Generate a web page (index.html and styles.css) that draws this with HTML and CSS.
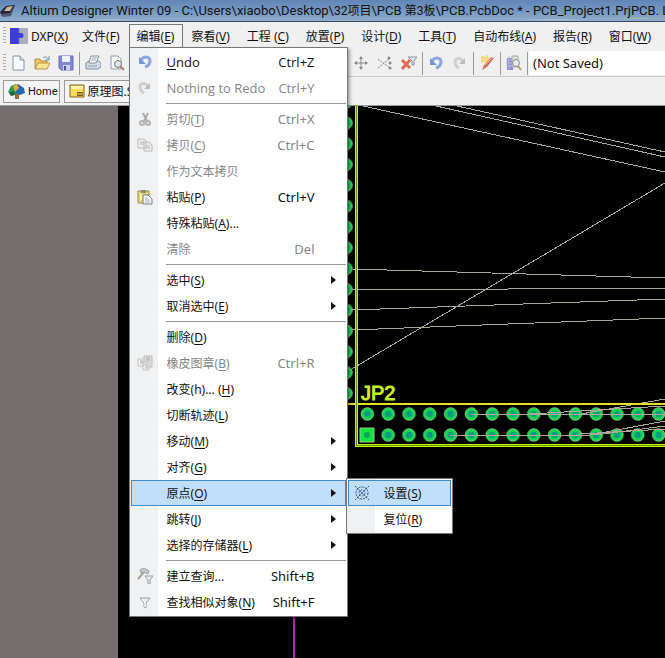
FILE: index.html
```html
<!DOCTYPE html>
<html lang="zh-CN">
<head>
<meta charset="utf-8">
<title>Altium Designer Winter 09</title>
<link rel="stylesheet" href="styles.css">
</head>
<body>
<header class="titlebar">
  <svg class="app-icon" width="16" height="16" viewBox="0 0 16 16"><path d="M0 9 6 3l9-1-4 9-9 2z" fill="#24243a"/><path d="m4 8 3-4 6-1-3 5z" fill="#c9b7a5"/><path d="m1 11 9-1 4-6-3 9-8 1z" fill="#55556c"/></svg>
  <span class="title">Altium Designer Winter 09 - C:\Users\xiaobo\Desktop\<span class="cjk">32项目</span>\PCB <span class="cjk">第3板</span>\PCB.PcbDoc * - PCB_Project1.PrjPCB. L</span>
</header>

<nav class="menubar">
  <span class="grip"></span>
  <button class="menu-title dxp"><svg width="18" height="16" viewBox="0 0 18 16"><path d="M0 0h9v16H0z" fill="#3c3cdd"/><path d="M9 0h9v16H9z" fill="#a9adbd"/><path d="M9 5h2a2.500 2.500 0 1 1 0 5H9z" fill="#3c3cdd"/><path d="M9 1v4M9 10v5" stroke="#777b99"/></svg><span>DXP(<u>X</u>)</span></button>
  <button class="menu-title">文件(<u>F</u>)</button>
  <div class="menu-host">
    <button class="menu-title open">编辑(<u>E</u>)</button>
    <div class="popup main-popup">
      <button class="item latin"><svg class="ico" viewBox="0 0 16 16"><path d="M4 6c3-4 9-4 9 1 0 3-2 5-5 6" fill="none" stroke="#8ba6df" stroke-width="3"/><path d="M2 3v7h7z" fill="#7595d7"/></svg><span><u>U</u>ndo</span><kbd>Ctrl+Z</kbd></button>
      <button class="item latin" disabled><svg class="ico" viewBox="0 0 16 16"><path d="M11 6C8 2 3 3 3 7c0 3 2 5 4 6" fill="none" stroke="#cfcfcf" stroke-width="3"/><path d="M13 3v6H7z" fill="#bdbdbd"/></svg><span>Nothing to Redo</span><kbd>Ctrl+Y</kbd></button>
      <hr>
      <button class="item" disabled><svg class="ico" viewBox="0 0 16 16"><path d="m6 2 4 8M11 2 7 10" stroke="#aaa" stroke-width="2" fill="none"/><circle cx="5" cy="12" r="2" fill="none" stroke="#b3b3b3" stroke-width="2"/><circle cx="11" cy="12" r="2" fill="none" stroke="#b3b3b3" stroke-width="2"/></svg><span>剪切(<u>T</u>)</span><kbd>Ctrl+X</kbd></button>
      <button class="item" disabled><svg class="ico" viewBox="0 0 16 16"><path d="M1 2h6l2 2v7H1zM7 5h5l3 3v6H7z" fill="#eee" stroke="#bbb"/><path d="M3 5h4M3 7h4M9 9h4M9 11h4" stroke="#bbb"/></svg><span>拷贝(<u>C</u>)</span><kbd>Ctrl+C</kbd></button>
      <button class="item" disabled><i class="ico"></i><span>作为文本拷贝</span></button>
      <button class="item"><svg class="ico" viewBox="0 0 16 16"><path d="M1 2h11v12H1z" fill="#e5d474" stroke="#a18c43"/><path d="M4 1h5v3H4z" fill="#8c8d7d"/><path d="M3 5h2v6H3z" fill="#f8efaa"/><path d="M6 6h5l4 4v5H6z" fill="#f5f6fb" stroke="#797f8e"/><path d="M8 9h3M8 11h5M8 13h5" stroke="#a5aec2"/></svg><span>粘贴(<u>P</u>)</span><kbd>Ctrl+V</kbd></button>
      <button class="item"><i class="ico"></i><span>特殊粘贴(<u>A</u>)...</span></button>
      <button class="item" disabled><i class="ico"></i><span>清除</span><kbd>Del</kbd></button>
      <hr>
      <button class="item sub"><i class="ico"></i><span>选中(<u>S</u>)</span></button>
      <button class="item sub"><i class="ico"></i><span>取消选中(<u>E</u>)</span></button>
      <hr>
      <button class="item"><i class="ico"></i><span>删除(<u>D</u>)</span></button>
      <button class="item" disabled><svg class="ico" viewBox="0 0 16 16"><path d="M7 1h8v11H7z" fill="#ddd" stroke="#bbb"/><path d="M1 4h6v7H1zM6 7h6v8H6z" fill="#f2f2f2" stroke="#c3c3c3"/><path d="M3 6h3M3 8h3M8 9h3M8 11h3M8 13h3M9 3h4M9 5h4" stroke="#aaa"/></svg><span>橡皮图章(<u>B</u>)</span><kbd>Ctrl+R</kbd></button>
      <button class="item"><i class="ico"></i><span>改变(h)... (<u>H</u>)</span></button>
      <button class="item"><i class="ico"></i><span>切断轨迹(<u>L</u>)</span></button>
      <button class="item sub"><i class="ico"></i><span>移动(<u>M</u>)</span></button>
      <button class="item sub"><i class="ico"></i><span>对齐(<u>G</u>)</span></button>
      <div class="menu-host">
        <button class="item sub active"><i class="ico"></i><span>原点(<u>O</u>)</span></button>
        <div class="popup sub-popup">
          <button class="item active"><svg class="ico" viewBox="0 0 16 16"><circle cx="8" cy="8" r="6" fill="none" stroke="#32486b" stroke-dasharray="2 1"/><circle cx="8" cy="8" r="3" fill="none" stroke="#52698e" stroke-dasharray="2 1"/><path d="m1 1 14 14M15 1 1 15" stroke="#32486b" stroke-dasharray="2 1"/></svg><span>设置(<u>S</u>)</span></button>
          <button class="item"><i class="ico"></i><span>复位(<u>R</u>)</span></button>
        </div>
      </div>
      <button class="item sub"><i class="ico"></i><span>跳转(<u>J</u>)</span></button>
      <button class="item sub"><i class="ico"></i><span>选择的存储器(<u>L</u>)</span></button>
      <hr>
      <button class="item"><svg class="ico" viewBox="0 0 16 16"><path d="m1 11 6-7" stroke="#a5a49b" stroke-width="2"/><path d="M3 2 7 0l5 3-1 3-4-2-3 1z" fill="#c4c9cc" stroke="#9a9fa1"/><path d="M8 8h8l-3 4v4h-2v-4z" fill="#e8edf0" stroke="#98a0a7"/></svg><span>建立查询...</span><kbd>Shift+B</kbd></button>
      <button class="item"><svg class="ico" viewBox="0 0 16 16"><path d="M3 4h10L9 9v5l-2-1V9z" fill="#edf0f2" stroke="#959da2"/><path d="m5 5 3 4v4" fill="none" stroke="#fff"/></svg><span>查找相似对象(<u>N</u>)</span><kbd>Shift+F</kbd></button>
    </div>
  </div>
  <button class="menu-title">察看(<u>V</u>)</button>
  <button class="menu-title">工程 (<u>C</u>)</button>
  <button class="menu-title">放置(<u>P</u>)</button>
  <button class="menu-title">设计(<u>D</u>)</button>
  <button class="menu-title">工具(<u>T</u>)</button>
  <button class="menu-title">自动布线(<u>A</u>)</button>
  <button class="menu-title">报告(<u>R</u>)</button>
  <button class="menu-title">窗口(<u>W</u>)</button>
</nav>

<div class="toolbar">
  <div class="tools file-tools">
    <span class="grip"></span>
    <button class="tool" aria-label="New"><svg viewBox="0 0 16 16"><path d="M3 1h7l4 4v10H3z" fill="#fcfdff" stroke="#8493ae"/><path d="M10 1v4h4" fill="#d3dced" stroke="#8493ae"/></svg></button>
    <button class="tool" aria-label="Open"><svg viewBox="0 0 16 16"><path d="M1 14V4h5l1 2h6v3" fill="#efca6c" stroke="#b18b3c"/><path d="m1 14 3-6h12l-3 6z" fill="#fbe397" stroke="#bc9143"/><path d="M9 3c2-2 4-1 5 1M15 1v4h-4" fill="none" stroke="#7488a8"/></svg></button>
    <button class="tool" aria-label="Save"><svg viewBox="0 0 16 16"><path d="M1 1h14v14H3l-2-2z" fill="#8587d1" stroke="#6a6cb9"/><path d="M4 1h8v6H4z" fill="#eef1ff"/><path d="M5 10h7v5H5z" fill="#cfd2e9"/><path d="M6 11h2v4H6z" fill="#4b4d91"/></svg></button>
    <span class="divider"></span>
    <button class="tool" aria-label="Print"><svg viewBox="0 0 16 16"><path d="m1 8 3-2h10l2 2v4l-3 2H1z" fill="#d5d9e4" stroke="#858da2"/><path d="M6 1h8l-3 7H4z" fill="#fff" stroke="#8990a2"/><path d="M3 11h9M7 3h5M6 5h5" stroke="#9aa1b2"/></svg></button>
    <button class="tool" aria-label="Print preview"><svg viewBox="0 0 16 16"><path d="M2 1h7l3 3v10H2z" fill="#fcfdff" stroke="#9099ad"/><circle cx="9" cy="9" r="3.500" fill="#dde5ed" stroke="#777"/><path d="m11 11 4 4" stroke="#aa8172" stroke-width="2"/></svg></button>
  </div>
  <div class="tools edit-tools">
    <button class="tool" aria-label="Move"><svg viewBox="0 0 16 16"><path d="M8 2v12M2 8h12" stroke="#888"/><path d="m6 4 2-3 2 3zM6 12l2 3 2-3zM4 6 1 8l3 2zM12 6l3 2-3 2z" fill="#888"/></svg></button>
    <button class="tool" aria-label="Deselect"><svg viewBox="0 0 16 16"><path d="m1 4 12 9M1 13 12 4" stroke="#888" stroke-dasharray="2 1"/><circle cx="12" cy="3" r="1.500" fill="#888"/><circle cx="13" cy="8" r="1.500" fill="#888"/><circle cx="13" cy="13" r="1.500" fill="#888"/></svg></button>
    <button class="tool" aria-label="Clear filter"><svg viewBox="0 0 16 16"><path d="M7 2h9l-3 4v4h-2V6z" fill="#dfe6eb" stroke="#8796a1"/><path d="m1 5 8 8M9 5l-8 9" stroke="#df6a55" stroke-width="3"/></svg></button>
    <span class="divider"></span>
    <button class="tool" aria-label="Undo"><svg viewBox="0 0 16 16"><path d="M4 6c3-4 9-4 9 1 0 3-2 5-5 6" fill="none" stroke="#8ba6df" stroke-width="3"/><path d="M2 3v7h7z" fill="#7595d7"/></svg></button>
    <button class="tool" aria-label="Redo"><svg viewBox="0 0 16 16"><path d="M11 6C8 2 3 3 3 7c0 3 2 5 4 6" fill="none" stroke="#cfcfcf" stroke-width="3"/><path d="M13 3v6H7z" fill="#bdbdbd"/></svg></button>
    <span class="divider"></span>
    <button class="tool" aria-label="Wizard"><svg viewBox="0 0 16 16"><path d="M2 1h7v7H2z" fill="#f9e6a0"/><path d="M2 3h8M4 1v6M8 0v6M2 6h5" stroke="#edc75c" stroke-dasharray="2 1"/><path d="m3 15 2-5 7-8 3 1-7 9z" fill="#d9705c"/><path d="m6 10 7-7" stroke="#f3b5a2"/></svg></button>
    <span class="divider"></span>
    <button class="tool" aria-label="Browse components"><svg viewBox="0 0 16 16"><path d="M1 3h6v12H1z" fill="#8989cf"/><path d="M6 1h6v11H6z" fill="#dce0d1" stroke="#a9afb0"/><path d="M0 5h7M0 8h7M0 11h7M3 1v14" stroke="#b8b9e2"/><circle cx="10" cy="8" r="3.500" fill="#e5ece9" stroke="#889"/><path d="m12 11 3 4" stroke="#b69d69" stroke-width="2"/></svg></button>
    <span class="divider"></span>
  </div>
  <input class="saved" aria-label="Saved view" value="(Not Saved)">
</div>

<div class="tabs">
  <button class="tab home"><svg width="17" height="16" viewBox="0 0 17 16"><path d="M7 7h4v9H7z" fill="#9a692c"/><path d="m0 9 3-6 5-2v9l-4 2z" fill="#309947"/><path d="m6 4 4-3 6 4 1 5-5 2-5-2z" fill="#2569a9"/><path d="m5 3 4-2 2 4-4 4z" fill="#e6ab38"/><path d="m1 10 5-2 1 4-4 1z" fill="#1b6938"/></svg>Home</button>
  <button class="tab"><svg width="16" height="14" viewBox="0 0 16 14"><path d="M1 1h14v12H1z" fill="#f8dc5a" stroke="#80651a"/><path d="M2 2h12v3H2z" fill="#fff2a5"/><path d="M8 8h6v4H8z" fill="#805b25"/><path d="M8 10h6" stroke="#f8dc5a"/></svg>原理图.SchDoc</button>
</div>

<main class="workspace">
  <aside class="outside"></aside>
  <svg class="board" viewBox="118 106 547 552" preserveAspectRatio="xMinYMin slice">
    <defs>
      <g id="pad"><circle r="6.300" fill="#14d650" stroke="#8fcf84" stroke-width=".8"/><circle r="3.200" fill="#0a9c80"/></g>
      <pattern id="pins" patternUnits="userSpaceOnUse" x="357" y="404" width="20.800" height="21"><use href="#pad" x="10.400" y="10"/></pattern>
      <pattern id="side" patternUnits="userSpaceOnUse" x="338" y="112" width="16" height="20.800"><use href="#pad" x="8" y="11"/></pattern>
    </defs>
    <path d="M338 106h16v294h-16z" fill="url(#side)"/>
    <path d="M357 404h308v41H357z" fill="url(#pins)"/>
    <path d="M360 428h14v14h-14z" fill="#14e63c" stroke="#a0c784"/><circle cx="367" cy="435" r="3" fill="#0da660"/>
    <g fill="none" stroke="#aaa99a" shape-rendering="crispEdges">
      <path d="m363 106 302 66M436 106l229 51M457 106l208 46M350 370l315-187M352 269l313 9M352 290l313-2M352 310l313-11M352 330l313-12"/>
      <path d="M471 414h110l84-15M528 414h137M530 414l135-8M450 435h140l75-14M595 435l70-9M580 434l85-5"/>
    </g>
    <path d="M348 404h317" stroke="#e8df24" stroke-width="2"/>
    <g fill="none" shape-rendering="crispEdges">
      <path d="M356.500 106v339.500H665" stroke="#c9f500" stroke-width="3"/>
      <path d="M356.500 106v339.500H665" stroke="#5c9400"/>
    </g>
    <text class="designator" x="361" y="400">JP2</text>
    <path d="M294 600v58" stroke="#a82ca8" stroke-width="2"/>
  </svg>
</main>
</body>
</html>
```

FILE: styles.css
```css
* { box-sizing: border-box; }
body {
  margin: 0;
  height: 100vh;
  display: flex;
  flex-direction: column;
  overflow: hidden;
  background: #f0f0f0;
  color: #111;
  font-family: "Noto Sans", "Noto Sans CJK SC", sans-serif;
  font-size: 12px;
}
button, input { font: inherit; color: inherit; }
button { margin: 0; padding: 0; border: 0; background: none; white-space: nowrap; }
u { text-underline-offset: 2px; }

.titlebar {
  display: flex;
  align-items: center;
  gap: 5px;
  height: 22px;
  flex: none;
  overflow: hidden;
  white-space: nowrap;
  border-bottom: 1px solid #344a60;
  background:
    radial-gradient(ellipse at 115px 20px, #b6bdc7 0, transparent 32px),
    radial-gradient(ellipse at 345px 22px, #a2c0b2 0, transparent 36px),
    radial-gradient(ellipse at 638px 18px, #a8bd8b 0, transparent 32px),
    radial-gradient(ellipse at 555px 20px, #b2bfce 0, transparent 36px),
    linear-gradient(#6185b5, #799cc5 60%, #8fabca);
}
.app-icon { flex: none; }
.title { font-family: Roboto, "Noto Sans CJK SC", sans-serif; font-size: 13px; line-height: 20px; }
.cjk { font-size: 12px; }

.menubar {
  display: flex;
  align-items: center;
  height: 28px;
  flex: none;
  padding-left: 3px;
}
.grip {
  flex: none;
  width: 3px;
  height: 18px;
  background: repeating-linear-gradient(#aaa 0 1px, #f0f0f0 1px 3px);
}
.menu-title { height: 24px; padding: 0 8px 0 7px; border: 1px solid transparent; flex: none; }
.dxp { display: flex; align-items: center; gap: 3px; padding: 0 5px 0 3px; }
.open { background: #f4f4f4; border-color: #777; border-bottom-color: #f4f4f4; }
.menu-host { position: relative; flex: none; }

.popup {
  position: absolute;
  display: flex;
  flex-direction: column;
  padding: 1px;
  border: 1px solid #777;
  background: linear-gradient(90deg, #f0f1f2 28px, #fff 28px);
  z-index: 2;
}
.main-popup { top: calc(100% - 1px); left: 0; width: 219px; box-shadow: 2px 2px 3px #0005; }
.sub-popup { top: -2px; left: 100%; width: 107px; }
.item {
  display: flex;
  align-items: center;
  width: 100%;
  height: 26px;
  padding: 0 30px 0 5px;
  border: 1px solid transparent;
  text-align: left;
}
.item .ico { width: 16px; height: 16px; flex: none; margin-right: 14px; }
.item span { flex: 1; }
.item kbd { font: inherit; font-size: 13px; }
.latin { font-family: "Open Sans", sans-serif; font-size: 13px; }
.item:disabled { color: #858585; }
.active { background: #bfdffd; border-color: #3f8bcb; }
.sub { padding-right: 9px; }
.sub::after {
  content: "";
  border: 4px solid transparent;
  border-left: 5px solid #111;
  border-right: 0;
}
.popup hr { width: calc(100% - 35px); margin: 2px 0 2px 35px; border: 0; border-top: 1px solid #999; }

.toolbar {
  display: flex;
  align-items: center;
  height: 27px;
  flex: none;
  border-bottom: 1px solid #c9c9c9;
}
.tools { display: flex; align-items: center; gap: 8px; }
.file-tools { flex: none; width: 353px; padding-left: 3px; }
.file-tools .grip { margin-right: -4px; }
.edit-tools { flex: none; padding-right: 4px; }
.tool { width: 16px; height: 16px; }
.tool svg { display: block; }
.divider { width: 1px; height: 23px; margin: 0 -3px; background: #999; }
.saved { flex: 1; min-width: 0; height: 24px; padding: 0 4px; border: 0; background: #fff; font-size: 13px; }

.tabs {
  display: flex;
  align-items: center;
  gap: 4px;
  height: 29px;
  flex: none;
  padding: 0 3px;
  border-bottom: 1px solid #999;
}
.tab {
  display: flex;
  align-items: center;
  gap: 3px;
  height: 23px;
  padding: 0 4px;
  border: 1px solid #999;
  background: #f4f4f4;
}
.home { padding: 0 1px 0 4px; font-family: Roboto, sans-serif; font-size: 11px; }

.workspace { display: flex; flex: 1; min-height: 0; background: #000; }
.outside { flex: none; width: 118px; background: #736d6d; }
.board { flex: 1; min-width: 0; height: 100%; display: block; }
.designator { font: 20px "Liberation Sans", sans-serif; fill: #d5ef1c; stroke: #c5ef1c; }
```
